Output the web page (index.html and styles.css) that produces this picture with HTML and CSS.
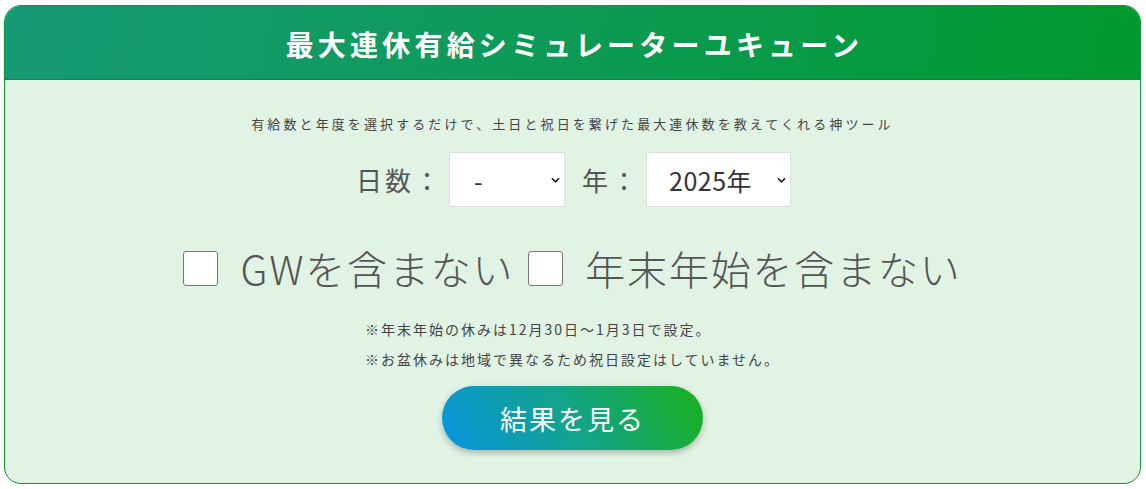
FILE: index.html
```html
<!DOCTYPE html>
<html lang="ja">
<head>
<meta charset="utf-8">
<link rel="stylesheet" href="styles.css">
</head>
<body>
<div class="card">
  <div class="card-head">
    <h1 class="title">最大連休有給シミュレーターユキューン</h1>
  </div>
  <div class="card-body">
    <p class="lead">有給数と年度を選択するだけで、土日と祝日を繋げた最大連休数を教えてくれる神ツール</p>
    <div class="selects">
      <label class="sel-label">日数：</label>
      <div class="select sel-days"><span>-</span><svg class="chev" viewBox="0 0 10 6" width="9" height="6"><path d="M1 1l4 4 4-4" fill="none" stroke="#222" stroke-width="1.8"/></svg></div>
      <label class="sel-label">年：</label>
      <div class="select sel-year"><span>2025年</span><svg class="chev" viewBox="0 0 10 6" width="9" height="6"><path d="M1 1l4 4 4-4" fill="none" stroke="#222" stroke-width="1.8"/></svg></div>
    </div>
    <div class="checks">
      <label class="check"><span class="box"></span><span class="check-text">GWを含まない</span></label>
      <label class="check"><span class="box"></span><span class="check-text">年末年始を含まない</span></label>
    </div>
    <div class="notes">
      <p>※年末年始の休みは12月30日〜1月3日で設定。</p>
      <p>※お盆休みは地域で異なるため祝日設定はしていません。</p>
    </div>
    <div class="btn-wrap"><button class="btn">結果を見る</button></div>
  </div>
</div>
</body>
</html>
```
FILE: styles.css
```css
html, body { margin: 0; padding: 0; background: #fff; }
body {
  font-family: "Noto Sans CJK JP", "Noto Sans", sans-serif;
  color: #555;
  padding: 5px 5px 4px 4px;
}
.card {
  border: 1px solid #0a9a35;
  border-radius: 17px;
  overflow: hidden;
  background: #e1f3e4;
  height: 479px;
  box-sizing: border-box;
}
.card-head {
  height: 70px;
  background: linear-gradient(100deg, #169a76 0%, #0e9a58 45%, #009a2e 100%);
  border-bottom: 1px solid #0a8a35;
  display: flex;
  align-items: center;
  justify-content: center;
  padding-top: 3px;
  box-sizing: content-box;
}
.title {
  margin: 0;
  color: #fff;
  font-size: 28px;
  font-weight: 700;
  letter-spacing: 4.2px;
  line-height: 1;
  padding-left: 4px;
}
.card-body {
  display: flex;
  flex-direction: column;
  align-items: center;
}
.lead {
  margin: 34px 0 0;
  font-size: 13px;
  letter-spacing: 3.1px;
  line-height: 20px;
  color: #444;
}
.selects {
  display: flex;
  align-items: center;
  margin-top: 18px;
  height: 55px;
  padding-left: 2px;
}
.sel-label {
  font-size: 26px;
  letter-spacing: 3px;
  margin-right: 6px;
}
.select {
  height: 55px;
  box-sizing: border-box;
  background: #fff;
  border: 1px solid #ddd;
  display: flex;
  align-items: center;
  font-size: 25px;
  color: #333;
  position: relative;
}
.sel-days { width: 116px; margin-right: 17px; padding-left: 24px; }
.sel-year { width: 145px; padding-left: 22px; letter-spacing: 0.5px; }
.chev { position: absolute; right: 4px; top: 24px; }
.checks {
  display: flex;
  align-items: center;
  margin-top: 37px;
  gap: 14px;
}
.check { display: flex; align-items: center; }
.box {
  width: 33px;
  height: 33px;
  background: #fff;
  border: 1px solid #777;
  border-radius: 3px;
  margin-right: 22px;
}
.check-text {
  font-size: 40px;
  font-weight: 300;
  letter-spacing: 1.8px;
  line-height: 1.2;
}
.notes {
  margin-top: 22px;
  font-size: 14px;
  color: #444;
  letter-spacing: 2px;
}
.notes p { margin: 0; line-height: 30px; }
.btn-wrap { margin-top: 12px; }
.btn {
  width: 261px;
  height: 64px;
  border: none;
  border-radius: 32px;
  background: linear-gradient(60deg, #0894e0 0%, #12a48a 50%, #1ab01a 100%);
  color: #fff;
  font-family: "Noto Sans CJK JP", sans-serif;
  font-size: 27px;
  letter-spacing: 2px;
  box-shadow: 0 3px 6px rgba(0,0,0,0.25);
}
```
